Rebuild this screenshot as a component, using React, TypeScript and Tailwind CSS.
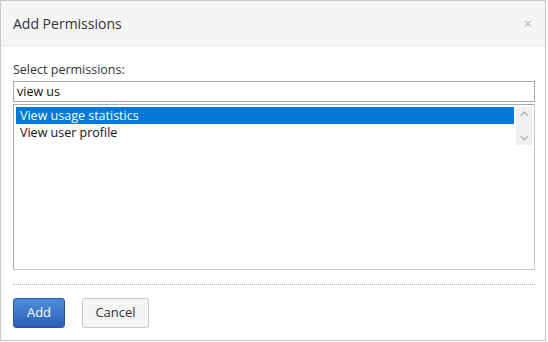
export default function App() {
  return (
    <div className="w-[548px] h-[342px] bg-white" style={{ fontFamily: '"Open Sans", "Noto Sans", sans-serif' }}>
      <div className="w-[546px] h-[341px] border border-[#c8c8c8] bg-white flex flex-col text-[#333]">
        <header className="h-[45px] shrink-0 bg-[#f5f5f5] border-b border-[#e5e5e5] pl-3 pr-[13px] flex items-center justify-between">
          <h1 className="text-[14px] text-[#333]">Add Permissions</h1>
          <button className="text-[#b5b5b5] text-[15px] leading-none">×</button>
        </header>

        <div className="pl-3 pr-[10px] pt-[15px] flex flex-col">
          <label className="text-[12.5px] leading-[18px]">Select permissions:</label>
          <input
            defaultValue="view us"
            className="mt-[2px] h-[21px] border border-[#a9a9a9] px-[3px] text-[12.5px] outline-none text-[#111]"
          />
          <div className="relative mt-[2px] h-[166px] border border-[#a9a9a9] border-r-[#c8c8c8] border-b-[#c8c8c8] p-[2px] text-[12.5px] leading-[17px] text-[#111]">
            <div className="mr-[18px] bg-[#0078d7] text-white px-[4px]">View usage statistics</div>
            <div className="mr-[18px] px-[4px]">View user profile</div>
            <div className="absolute right-[2px] top-[2px] w-[16px] h-[38px] bg-[#f0f0f0] flex flex-col items-center justify-between py-[4px]">
              <svg viewBox="0 0 10 6" className="w-[9px] h-[6px]" fill="none" stroke="#a8a8a8" strokeWidth="1.3">
                <path d="M1 5L5 1L9 5" />
              </svg>
              <svg viewBox="0 0 10 6" className="w-[9px] h-[6px]" fill="none" stroke="#a8a8a8" strokeWidth="1.3">
                <path d="M1 1L5 5L9 1" />
              </svg>
            </div>
          </div>
          <div className="mt-[14px] border-t border-dotted border-[#b8b8b8]" />
          <div className="mt-[13px] flex gap-[17px]">
            <button className="w-[52px] h-[30px] rounded-[3px] border border-[#2a56a8] bg-gradient-to-b from-[#4d8fdc] to-[#2b5fb8] text-white text-[13px]">
              Add
            </button>
            <button className="w-[67px] h-[30px] rounded-[3px] border border-[#c8c8c8] bg-[#f5f5f5] text-[#333] text-[13px]">
              Cancel
            </button>
          </div>
        </div>
      </div>
    </div>
  );
}
